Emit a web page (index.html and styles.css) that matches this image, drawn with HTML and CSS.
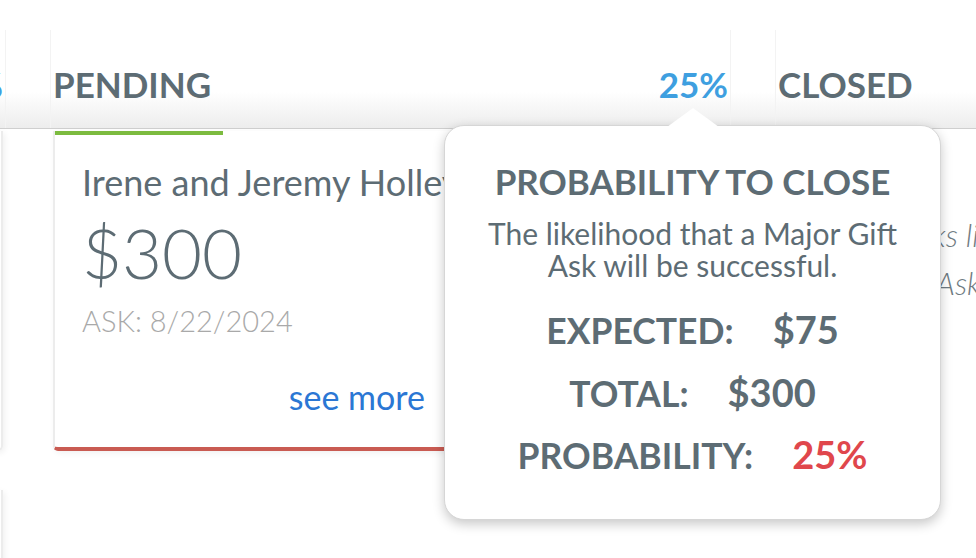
FILE: index.html
```html
<!DOCTYPE html>
<html lang="en">
<head>
  <meta charset="UTF-8">
  <meta name="viewport" content="width=device-width, initial-scale=1.0">
  <title>Major Gift Asks</title>
  <link rel="stylesheet" href="styles.css">
</head>
<body>
  <div class="board-head">
    <div class="col-head">
      <span class="stage">IN PROGRESS</span>
      <span class="pct">75%</span>
    </div>
    <div class="col-head">
      <span class="stage">PENDING</span>
      <span class="pct">25%</span>
    </div>
    <div class="col-head">
      <span class="stage">CLOSED</span>
      <span class="pct"></span>
    </div>
  </div>

  <div class="board-body">
    <div class="col">
      <div class="card card-plain">
        <div class="card-body">
          <p class="donor">Margaret Olsen</p>
          <p class="amount">$1,200</p>
          <p class="ask-date">ASK: 7/14/2024</p>
          <p class="more"><a href="#">see more</a></p>
        </div>
      </div>
      <div class="card card-plain">
        <div class="card-body">
          <p class="donor">Thomas Reyes</p>
          <p class="amount">$500</p>
          <p class="ask-date">ASK: 8/02/2024</p>
          <p class="more"><a href="#">see more</a></p>
        </div>
      </div>
    </div>

    <div class="col">
      <div class="card card-pending">
        <div class="progress" style="width: 25%"></div>
        <div class="card-body">
          <p class="donor">Irene and Jeremy Holley</p>
          <p class="amount">$300</p>
          <p class="ask-date">ASK: 8/22/2024</p>
          <p class="more"><a href="#">see more</a></p>
        </div>
      </div>
    </div>

    <div class="col">
      <p class="empty">Closed asks list is empty.<br>Close the Ask to move it here.</p>
    </div>
  </div>

  <div class="popover">
    <div class="popover-arrow"></div>
    <h3>PROBABILITY TO CLOSE</h3>
    <p class="popover-desc">The likelihood that a Major Gift<br>Ask will be successful.</p>
    <div class="stats">
      <div class="stat"><span>EXPECTED:</span><span class="val">$75</span></div>
      <div class="stat"><span>TOTAL:</span><span class="val">$300</span></div>
      <div class="stat"><span>PROBABILITY:</span><span class="val red">25%</span></div>
    </div>
  </div>
</body>
</html>
```

FILE: styles.css
```css
body {
  margin: 0;
  background: #ffffff;
  color: #5d6c74;
  font-family: 'Lato', 'Open Sans', sans-serif;
  overflow: hidden;
}
p {
  margin: 0;
}
.board-head,
.board-body {
  display: flex;
  gap: 50px;
  margin-left: -672px;
}
.board-head {
  background: linear-gradient(to bottom, #ffffff 72%, #ededed 100%);
  border-bottom: 1px solid #cfcfcf;
}
.col-head {
  flex: 0 0 675px;
  display: flex;
  justify-content: space-between;
  align-items: center;
  box-sizing: border-box;
  height: 128px;
  padding: 40px 0 0;
  font-size: 35px;
  font-weight: 700;
  position: relative;
}
.col-head::before,
.col-head::after {
  content: "";
  position: absolute;
  top: 30px;
  bottom: 0;
  width: 1px;
  background: #f3f3f3;
}
.col-head::before {
  left: -3px;
}
.col-head::after {
  right: -3px;
}
.pct {
  color: #3e9fe0;
}
.col {
  flex: 0 0 675px;
  display: flex;
  flex-direction: column;
  gap: 39px;
  padding-top: 2px;
}
.card {
  position: relative;
  box-sizing: border-box;
  height: 320px;
  border: 2px solid #ececec;
  border-top: none;
  border-radius: 0 0 5px 5px;
  box-shadow: 2px 2px 6px rgba(0, 0, 0, 0.06);
}
.card-pending {
  border-bottom: 4px solid #c95b52;
}
.progress {
  height: 4px;
  background: #7cbb3f;
}
.card-plain .card-body {
  padding-top: 30px;
}
.card-body {
  padding: 26px 0 0 27px;
  width: 343px;
}
.donor {
  font-size: 36px;
  line-height: 42px;
  white-space: nowrap;
}
.amount {
  margin-top: 14px;
  font-size: 69px;
  font-weight: 300;
  line-height: 72px;
}
.ask-date {
  margin-top: 15px;
  font-size: 29px;
  font-weight: 300;
  line-height: 34px;
  color: #a9a9a9;
}
.more {
  margin-top: 38px;
  font-size: 34px;
  line-height: 41px;
  text-align: right;
}
.more a {
  color: #2b77d4;
  text-decoration: none;
}
.empty {
  margin-top: 80px;
  padding-left: 34px;
  font-size: 31px;
  font-style: italic;
  font-weight: 300;
  line-height: 48px;
  color: #6f7b82;
  white-space: nowrap;
}
.popover {
  position: absolute;
  left: 444px;
  top: 125px;
  width: 497px;
  height: 395px;
  box-sizing: border-box;
  background: #ffffff;
  border: 1px solid #d6d6d6;
  border-radius: 20px;
  box-shadow: 0 4px 12px rgba(0, 0, 0, 0.22);
  text-align: center;
  padding-top: 34px;
}
.popover-arrow {
  position: absolute;
  top: -18px;
  left: 222px;
  width: 0;
  height: 0;
  border-left: 26px solid transparent;
  border-right: 26px solid transparent;
  border-bottom: 19px solid #ffffff;
}
.popover h3 {
  margin: 0;
  font-size: 35px;
  font-weight: 700;
  line-height: 42px;
}
.popover-desc {
  margin-top: 15px;
  font-size: 30px;
  line-height: 32px;
}
.stats {
  margin-top: 17px;
}
.stat {
  display: flex;
  justify-content: center;
  align-items: baseline;
  gap: 39px;
  height: 62.5px;
  font-size: 35.5px;
  font-weight: 700;
  line-height: 62px;
}
.val {
  font-size: 38px;
}
.red {
  color: #e0474c;
}
```
